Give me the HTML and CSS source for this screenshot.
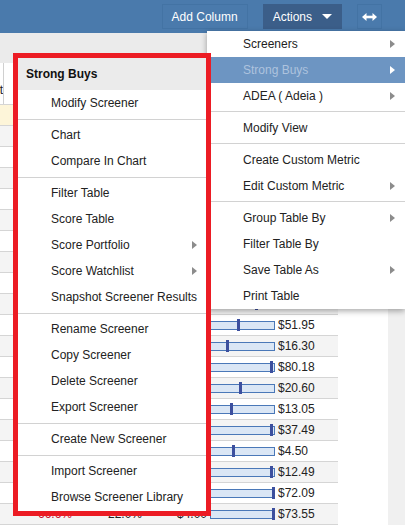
FILE: index.html
```html
<!DOCTYPE html>
<html lang="en">
<head>
<meta charset="utf-8">
<title>Screener</title>
<link rel="stylesheet" href="styles.css">
</head>
<body>
<div class="app">
  <header class="topbar">
    <button class="btn">Add Column</button>
    <button class="btn btn-dark">Actions <span class="caret"></span></button>
    <button class="btn btn-icon" aria-label="Expand">
      <svg width="15" height="8" viewBox="0 0 15 8"><path d="M4 2.7h7v2.6H4z" fill="#fff"/><path d="M0 4l4.5-4v8z" fill="#fff"/><path d="M15 4l-4.5-4v8z" fill="#fff"/></svg>
    </button>
  </header>
  <div class="toolbar"></div>
  <div class="main">
    <div class="table">
      <div class="thead"><div class="th-first">Last</div></div>
      <div class="row sel"><span class="c"></span><span class="c"></span><span class="c"></span><span class="barcell"><span class="bar"><i class="mk" style="left:30px"></i></span></span><span class="price"></span></div>
      <div class="row"><span class="c"></span><span class="c"></span><span class="c"></span><span class="barcell"><span class="bar"><i class="mk" style="left:40px"></i></span></span><span class="price"></span></div>
      <div class="row"><span class="c"></span><span class="c"></span><span class="c"></span><span class="barcell"><span class="bar"><i class="mk" style="left:20px"></i></span></span><span class="price"></span></div>
      <div class="row"><span class="c"></span><span class="c"></span><span class="c"></span><span class="barcell"><span class="bar"><i class="mk" style="left:55px"></i></span></span><span class="price"></span></div>
      <div class="row"><span class="c"></span><span class="c"></span><span class="c"></span><span class="barcell"><span class="bar"><i class="mk" style="left:33px"></i></span></span><span class="price"></span></div>
      <div class="row"><span class="c"></span><span class="c"></span><span class="c"></span><span class="barcell"><span class="bar"><i class="mk" style="left:60px"></i></span></span><span class="price"></span></div>
      <div class="row"><span class="c"></span><span class="c"></span><span class="c"></span><span class="barcell"><span class="bar"><i class="mk" style="left:25px"></i></span></span><span class="price"></span></div>
      <div class="row"><span class="c"></span><span class="c"></span><span class="c"></span><span class="barcell"><span class="bar"><i class="mk" style="left:48px"></i></span></span><span class="price"></span></div>
      <div class="row"><span class="c"></span><span class="c"></span><span class="c"></span><span class="barcell"><span class="bar"><i class="mk" style="left:36px"></i></span></span><span class="price"></span></div>
      <div class="row"><span class="c"></span><span class="c"></span><span class="c"></span><span class="barcell"><span class="bar"><i class="mk" style="left:45px"></i></span></span><span class="price"></span></div>
      <div class="row"><span class="c"></span><span class="c"></span><span class="c"></span><span class="barcell"><span class="bar"><i class="mk" style="left:27px"></i></span></span><span class="price">$51.95</span></div>
      <div class="row"><span class="c"></span><span class="c"></span><span class="c"></span><span class="barcell"><span class="bar"><i class="mk" style="left:16px"></i></span></span><span class="price">$16.30</span></div>
      <div class="row"><span class="c"></span><span class="c"></span><span class="c"></span><span class="barcell"><span class="bar"><i class="mk" style="left:60px"></i></span></span><span class="price">$80.18</span></div>
      <div class="row"><span class="c"></span><span class="c"></span><span class="c"></span><span class="barcell"><span class="bar"><i class="mk" style="left:29px"></i></span></span><span class="price">$20.60</span></div>
      <div class="row"><span class="c"></span><span class="c"></span><span class="c"></span><span class="barcell"><span class="bar"><i class="mk" style="left:20px"></i></span></span><span class="price">$13.05</span></div>
      <div class="row"><span class="c"></span><span class="c"></span><span class="c"></span><span class="barcell"><span class="bar"><i class="mk" style="left:60px"></i></span></span><span class="price">$37.49</span></div>
      <div class="row"><span class="c"></span><span class="c"></span><span class="c"></span><span class="barcell"><span class="bar"><i class="mk" style="left:22px"></i></span></span><span class="price">$4.50</span></div>
      <div class="row"><span class="c"></span><span class="c"></span><span class="c"></span><span class="barcell"><span class="bar"><i class="mk" style="left:60px"></i></span></span><span class="price">$12.49</span></div>
      <div class="row"><span class="c"></span><span class="c"></span><span class="c"></span><span class="barcell"><span class="bar"><i class="mk" style="left:62px"></i></span></span><span class="price">$72.09</span></div>
      <div class="row"><span class="c neg">-66.6%</span><span class="c">22.0%</span><span class="c">$4.00</span><span class="barcell"><span class="bar"><i class="mk" style="left:62px"></i></span></span><span class="price">$73.55</span></div>
    </div>
    <div class="gutter"></div>
    <div class="scroll"></div>
  </div>

  <nav class="menu menu-actions">
    <div class="item">Screeners<span class="arrow"></span></div>
    <div class="item active">Strong Buys<span class="arrow"></span></div>
    <div class="item">ADEA ( Adeia )<span class="arrow"></span></div>
    <div class="sep"></div>
    <div class="item">Modify View</div>
    <div class="sep"></div>
    <div class="item">Create Custom Metric</div>
    <div class="item">Edit Custom Metric<span class="arrow"></span></div>
    <div class="sep"></div>
    <div class="item">Group Table By<span class="arrow"></span></div>
    <div class="item">Filter Table By</div>
    <div class="item">Save Table As<span class="arrow"></span></div>
    <div class="item">Print Table</div>
  </nav>

  <nav class="menu menu-screener">
    <div class="menu-head">Strong Buys</div>
    <div class="item">Modify Screener</div>
    <div class="sep"></div>
    <div class="item">Chart</div>
    <div class="item">Compare In Chart</div>
    <div class="sep"></div>
    <div class="item">Filter Table</div>
    <div class="item">Score Table</div>
    <div class="item">Score Portfolio<span class="arrow"></span></div>
    <div class="item">Score Watchlist<span class="arrow"></span></div>
    <div class="item">Snapshot Screener Results</div>
    <div class="sep"></div>
    <div class="item">Rename Screener</div>
    <div class="item">Copy Screener</div>
    <div class="item">Delete Screener</div>
    <div class="item">Export Screener</div>
    <div class="sep"></div>
    <div class="item">Create New Screener</div>
    <div class="sep"></div>
    <div class="item">Import Screener</div>
    <div class="item">Browse Screener Library</div>
  </nav>
</div>
</body>
</html>
```

FILE: styles.css
```css
html, body {
  margin: 0;
  padding: 0;
}
body {
  width: 405px;
  height: 525px;
  overflow: hidden;
  background: #fff;
  font-family: "Liberation Sans", Arial, sans-serif;
  font-size: 12px;
  color: #222;
}
.app {
  position: relative;
  width: 405px;
  height: 525px;
  display: flex;
  flex-direction: column;
  overflow: hidden;
}

/* top bar */
.topbar {
  height: 33px;
  flex: none;
  box-sizing: border-box;
  background: #4a7aac;
  display: flex;
  justify-content: flex-end;
  align-items: flex-start;
  padding: 4px 23px 0 0;
  gap: 15px;
}
.btn {
  height: 25px;
  box-sizing: border-box;
  margin: 0;
  border: 1px solid #4373a4;
  background: #4a7aac;
  color: #fff;
  font: inherit;
  padding: 0 9px;
  display: flex;
  align-items: center;
  gap: 10px;
}
.btn-dark {
  background: #3b5e89;
  border-color: #3b5e89;
}
.btn-icon {
  width: 25px;
  padding: 0;
  justify-content: center;
}
.caret {
  width: 0;
  height: 0;
  border-left: 5px solid transparent;
  border-right: 5px solid transparent;
  border-top: 5px solid #fff;
}

.toolbar {
  height: 30px;
  flex: none;
  background: #ebebeb;
}

/* table */
.main {
  flex: 1;
  display: flex;
  min-height: 0;
}
.table {
  width: 338px;
  flex: none;
}
.gutter {
  flex: 1;
  background: #fff;
}
.scroll {
  width: 17px;
  background: #f0f0f0;
}
.thead {
  height: 42px;
  box-sizing: border-box;
  border-bottom: 1px solid #d5d5d5;
  display: flex;
}
.th-first {
  width: 3px;
  border-right: 1px solid #d0d0d0;
  overflow: hidden;
  white-space: nowrap;
  display: flex;
  justify-content: flex-end;
  align-items: flex-end;
  padding-bottom: 7px;
  box-sizing: content-box;
}
.row {
  display: grid;
  grid-template-columns: 76px 70px 64px 66px 62px;
  height: 21px;
  box-sizing: border-box;
  border-bottom: 1px solid #d5d5d5;
  align-items: center;
  background: #fff;
}
.row:nth-child(odd) {
  background: #f4f4f4;
}
.row.sel {
  background: #fdf5d9;
}
.c {
  text-align: right;
  padding-right: 4px;
  white-space: nowrap;
}
.c:nth-child(3) {
  padding-right: 3px;
}
.c.neg {
  color: #c8102e;
}
.barcell {
  display: flex;
  align-items: center;
}
.bar {
  position: relative;
  width: 65px;
  height: 9px;
  box-sizing: border-box;
  border: 1px solid #4a78b8;
  background: #dae6f5;
}
.mk {
  position: absolute;
  top: -3px;
  width: 3px;
  height: 12px;
  margin-left: -1px;
  background: #3c4f9e;
}
.price {
  padding-left: 2px;
  white-space: nowrap;
}

/* menus */
.menu {
  position: absolute;
  background: #fff;
  box-sizing: border-box;
}
.item {
  height: 26px;
  display: flex;
  align-items: center;
  white-space: nowrap;
}
.arrow {
  margin-left: auto;
  width: 0;
  height: 0;
  border-top: 4.5px solid transparent;
  border-bottom: 4.5px solid transparent;
  border-left: 5px solid #8c8c8c;
}
.sep {
  border-top: 1px solid #d2d2d2;
}

.menu-actions {
  left: 207px;
  top: 31px;
  right: 0;
  box-shadow: 0 2px 6px rgba(0, 0, 0, 0.35);
  z-index: 1;
}
.menu-actions .item {
  padding: 0 10px 0 36px;
}
.menu-actions .sep {
  margin: 2px 0 3px;
}
.menu-actions .item.active {
  background: #6d95c2;
  color: #adc3de;
}
.menu-actions .item.active .arrow {
  border-left-color: #fff;
}

.menu-screener {
  left: 13px;
  top: 53px;
  width: 198px;
  height: 463px;
  border: 5px solid #ec1c24;
  z-index: 2;
}
.menu-head {
  height: 32px;
  background: #ebebeb;
  font-weight: bold;
  color: #111;
  display: flex;
  align-items: center;
  padding-left: 8px;
}
.menu-screener .item {
  padding: 0 9px 0 33px;
}
.menu-screener .sep {
  margin: 3px 0 2px;
}
```
